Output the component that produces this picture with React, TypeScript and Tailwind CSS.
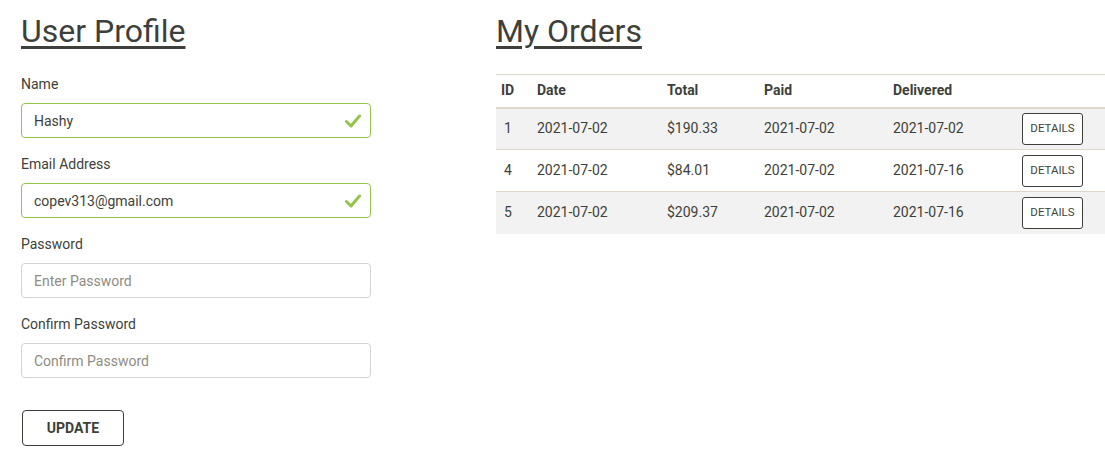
import { ReactNode } from "react";

const orders = [
  { id: 1, date: "2021-07-02", total: "$190.33", paid: "2021-07-02", delivered: "2021-07-02" },
  { id: 4, date: "2021-07-02", total: "$84.01", paid: "2021-07-02", delivered: "2021-07-16" },
  { id: 5, date: "2021-07-02", total: "$209.37", paid: "2021-07-02", delivered: "2021-07-16" },
];

function Check() {
  return (
    <svg width="16" height="14" viewBox="0 0 16 14" className="absolute right-[10px] top-[11px]">
      <path d="M1.5 7.5 L6 12 L14.5 2" fill="none" stroke="#93c54b" strokeWidth="3" strokeLinecap="round" strokeLinejoin="round" />
    </svg>
  );
}

function Field({ label, children }: { label: string; children: ReactNode }) {
  return (
    <div className="flex flex-col">
      <label className="text-[14px] leading-[20px] mb-[9px]">{label}</label>
      {children}
    </div>
  );
}

function ValidInput({ value }: { value: string }) {
  return (
    <div className="relative">
      <input
        readOnly
        value={value}
        className="w-full h-[35px] rounded-[4px] border border-[#93c54b] pl-[12px] pr-[36px] text-[14px] text-[#3e3f3a] outline-none"
      />
      <Check />
    </div>
  );
}

function PlainInput({ placeholder }: { placeholder: string }) {
  return (
    <input
      type="password"
      placeholder={placeholder}
      className="w-full h-[35px] rounded-[4px] border border-[#d4d4d4] px-[12px] text-[14px] placeholder:text-[#8e8c84] outline-none"
    />
  );
}

export default function App() {
  return (
    <div className="flex bg-white text-[#3e3f3a] font-['Roboto',sans-serif] h-[460px] overflow-hidden">
      <div className="w-[350px] ml-[21px] mr-[125px] shrink-0">
        <h2 className="text-[32px] leading-[42px] mt-[10px] underline underline-offset-[4px] decoration-[3px]">User Profile</h2>
        <div className="flex flex-col gap-[16px] mt-[22px]">
          <Field label="Name">
            <ValidInput value="Hashy" />
          </Field>
          <Field label="Email Address">
            <ValidInput value="copev313@gmail.com" />
          </Field>
          <Field label="Password">
            <PlainInput placeholder="Enter Password" />
          </Field>
          <Field label="Confirm Password">
            <PlainInput placeholder="Confirm Password" />
          </Field>
        </div>
        <button className="mt-[32px] ml-[1px] w-[102px] h-[36px] rounded-[4px] border border-[#3e3f3a] text-[14px] font-bold">
          UPDATE
        </button>
      </div>
      <div className="flex-1">
        <h2 className="text-[32px] leading-[42px] mt-[10px] underline underline-offset-[4px] decoration-[3px]">My Orders</h2>
        <table className="w-full mt-[22px] border-t border-[#dfd7ca] text-[14px] border-collapse">
          <thead>
            <tr className="border-b-2 border-[#dfd7ca] h-[33px] text-left">
              <th className="w-[36px] pl-[5px] font-bold">ID</th>
              <th className="w-[130px] pl-[5px] font-bold">Date</th>
              <th className="w-[97px] pl-[5px] font-bold">Total</th>
              <th className="w-[129px] pl-[5px] font-bold">Paid</th>
              <th className="w-[124px] pl-[5px] font-bold">Delivered</th>
              <th></th>
            </tr>
          </thead>
          <tbody>
            {orders.map((o, i) => (
              <tr key={o.id} className={i % 2 === 0 ? "bg-[#f2f2f2] h-[42px] border-b border-[#dfd7ca] last:border-b-0" : "h-[42px] border-b border-[#dfd7ca]"}>
                <td className="pl-[8px]">{o.id}</td>
                <td className="pl-[5px]">{o.date}</td>
                <td className="pl-[5px]">{o.total}</td>
                <td className="pl-[5px]">{o.paid}</td>
                <td className="pl-[5px]">{o.delivered}</td>
                <td className="pl-[10px]">
                  <button className="w-[61px] h-[32px] rounded-[3px] border border-[#3e3f3a] text-[11.5px] bg-white">DETAILS</button>
                </td>
              </tr>
            ))}
          </tbody>
        </table>
      </div>
    </div>
  );
}
